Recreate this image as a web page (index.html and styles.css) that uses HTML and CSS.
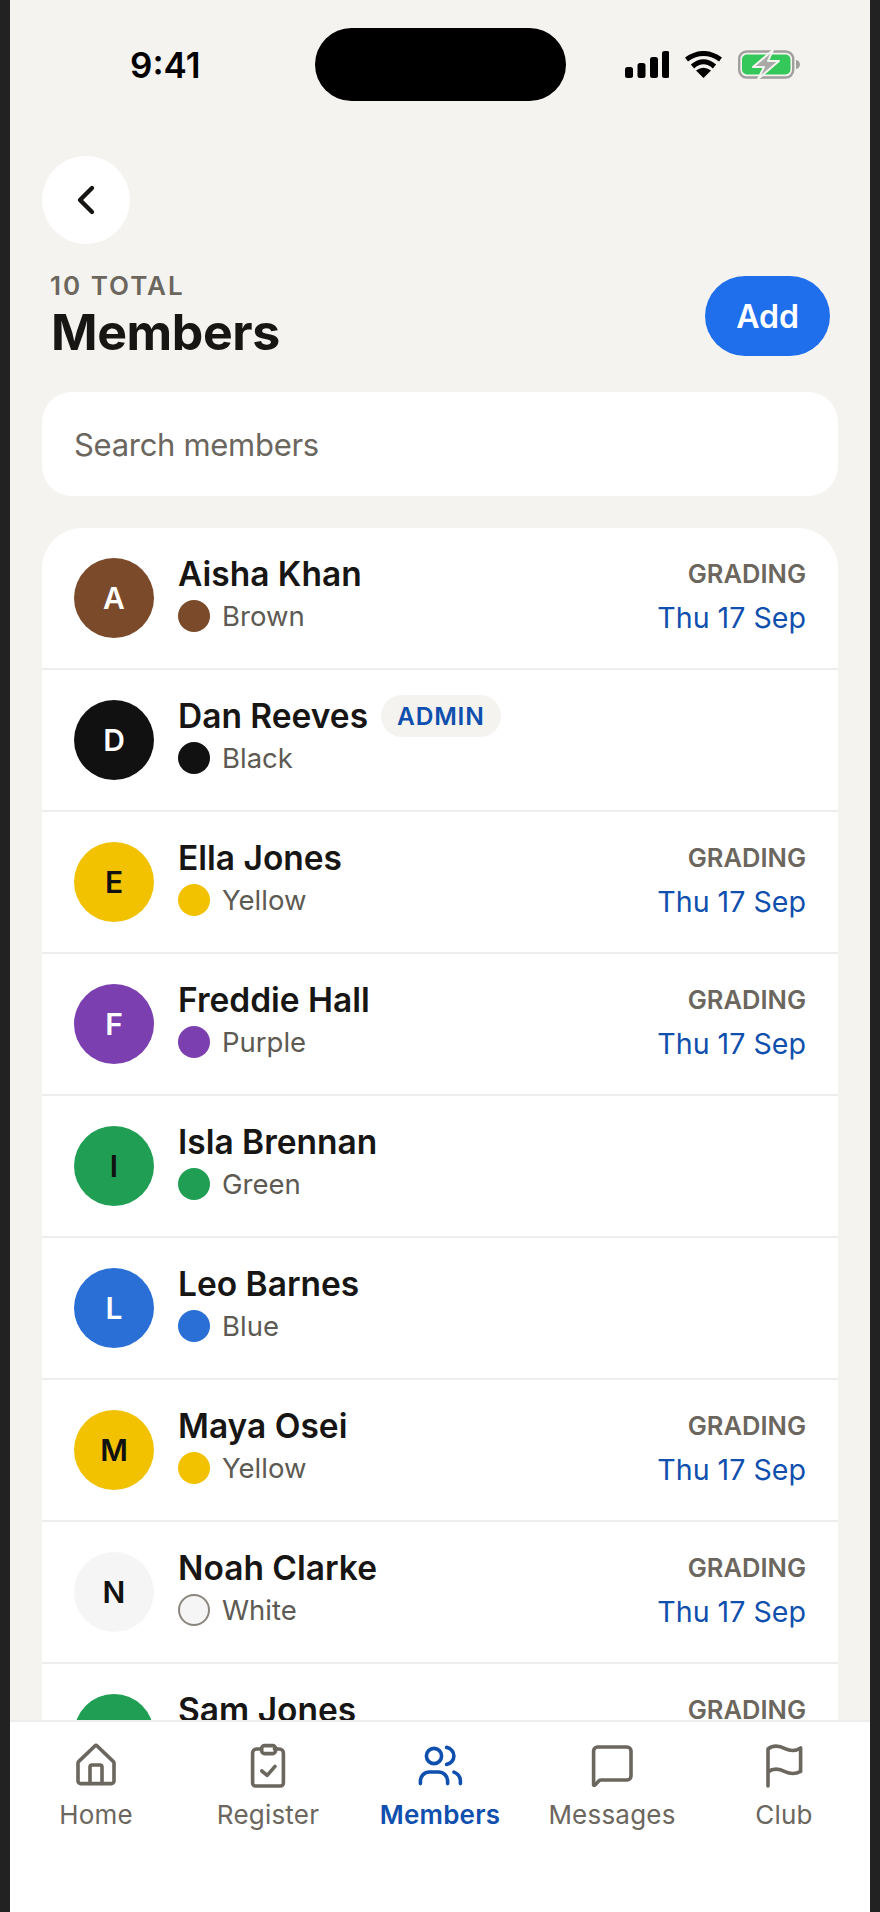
FILE: index.html
```html
<!DOCTYPE html>
<html lang="en">
<head>
    <meta charset="UTF-8">
    <meta name="viewport" content="width=device-width, initial-scale=1.0">
    <title>Members</title>
    <link rel="stylesheet" href="styles.css">
</head>
<body>
    <div class="phone">
        <div class="status-bar">
            <span class="status-time">9:41</span>
            <span class="island"></span>
            <div class="status-icons">
                <svg class="signal" width="44" height="27" viewBox="0 0 44 27" fill="#000">
                    <rect x="0" y="16" width="8" height="11" rx="2.5"/>
                    <rect x="12.5" y="12" width="8" height="15" rx="2.5"/>
                    <rect x="25" y="6" width="8" height="21" rx="2.5"/>
                    <rect x="37" y="0" width="7.5" height="27" rx="2.5"/>
                </svg>
                <svg class="wifi" width="39" height="27" viewBox="0 0 39 27">
                    <path d="M2.5 8.5Q19.5 -3.5 36.5 8.5" fill="none" stroke="#000" stroke-width="5"/>
                    <path d="M8.5 15.5Q19.5 6 30.5 15.5" fill="none" stroke="#000" stroke-width="5"/>
                    <path d="M19.5 27L12 19.5Q19.5 14 27 19.5Z" fill="#000"/>
                </svg>
                <svg class="battery" width="62" height="29" viewBox="0 0 62 29">
                    <rect x="1.2" y="1.5" width="54" height="26" rx="7.5" fill="none" stroke="#9f9f9d" stroke-width="2.4"/>
                    <rect x="4" y="4.5" width="48.5" height="20" rx="5" fill="#34c759"/>
                    <path d="M58 10c2.4 .5 4 2.200 4 4.500s-1.600 4-4 4.500Z" fill="#9f9f9d"/>
                    <path d="M35 0L15 17H26L20 29L41 11H30Z" fill="#a9a9a7" stroke="#f4f3ef" stroke-width="2" stroke-linejoin="round"/>
                </svg>
            </div>
        </div>

        <div class="content">
            <button class="back-btn" type="button" aria-label="Back">
                <svg width="48" height="48" viewBox="0 0 24 24" fill="none" stroke="#161513" stroke-width="2.200" stroke-linecap="round" stroke-linejoin="round">
                    <path d="M15 6L9 12l6 6"/>
                </svg>
            </button>

            <div class="page-head">
                <div>
                    <p class="overline">10 TOTAL</p>
                    <h1>Members</h1>
                </div>
                <button class="add-btn" type="button">Add</button>
            </div>

            <div class="search">Search members</div>

            <div class="member-list">
                <div class="member">
                    <div class="avatar belt-brown">A</div>
                    <div class="member-info">
                        <div class="name-line"><span class="name">Aisha Khan</span></div>
                        <div class="belt"><span class="dot belt-brown"></span>Brown</div>
                    </div>
                    <div class="grading">
                        <div class="grading-label">GRADING</div>
                        <div class="grading-date">Thu 17 Sep</div>
                    </div>
                </div>
                <div class="member">
                    <div class="avatar belt-black">D</div>
                    <div class="member-info">
                        <div class="name-line"><span class="name">Dan Reeves</span><span class="badge">ADMIN</span></div>
                        <div class="belt"><span class="dot belt-black"></span>Black</div>
                    </div>
                </div>
                <div class="member">
                    <div class="avatar belt-yellow">E</div>
                    <div class="member-info">
                        <div class="name-line"><span class="name">Ella Jones</span></div>
                        <div class="belt"><span class="dot belt-yellow"></span>Yellow</div>
                    </div>
                    <div class="grading">
                        <div class="grading-label">GRADING</div>
                        <div class="grading-date">Thu 17 Sep</div>
                    </div>
                </div>
                <div class="member">
                    <div class="avatar belt-purple">F</div>
                    <div class="member-info">
                        <div class="name-line"><span class="name">Freddie Hall</span></div>
                        <div class="belt"><span class="dot belt-purple"></span>Purple</div>
                    </div>
                    <div class="grading">
                        <div class="grading-label">GRADING</div>
                        <div class="grading-date">Thu 17 Sep</div>
                    </div>
                </div>
                <div class="member">
                    <div class="avatar belt-green">I</div>
                    <div class="member-info">
                        <div class="name-line"><span class="name">Isla Brennan</span></div>
                        <div class="belt"><span class="dot belt-green"></span>Green</div>
                    </div>
                </div>
                <div class="member">
                    <div class="avatar belt-blue">L</div>
                    <div class="member-info">
                        <div class="name-line"><span class="name">Leo Barnes</span></div>
                        <div class="belt"><span class="dot belt-blue"></span>Blue</div>
                    </div>
                </div>
                <div class="member">
                    <div class="avatar belt-yellow">M</div>
                    <div class="member-info">
                        <div class="name-line"><span class="name">Maya Osei</span></div>
                        <div class="belt"><span class="dot belt-yellow"></span>Yellow</div>
                    </div>
                    <div class="grading">
                        <div class="grading-label">GRADING</div>
                        <div class="grading-date">Thu 17 Sep</div>
                    </div>
                </div>
                <div class="member">
                    <div class="avatar belt-white">N</div>
                    <div class="member-info">
                        <div class="name-line"><span class="name">Noah Clarke</span></div>
                        <div class="belt"><span class="dot belt-white dot-outline"></span>White</div>
                    </div>
                    <div class="grading">
                        <div class="grading-label">GRADING</div>
                        <div class="grading-date">Thu 17 Sep</div>
                    </div>
                </div>
                <div class="member">
                    <div class="avatar belt-green">S</div>
                    <div class="member-info">
                        <div class="name-line"><span class="name">Sam Jones</span></div>
                        <div class="belt"><span class="dot belt-green"></span>Green</div>
                    </div>
                    <div class="grading">
                        <div class="grading-label">GRADING</div>
                        <div class="grading-date">Thu 17 Sep</div>
                    </div>
                </div>
            </div>
        </div>

        <nav class="tab-bar">
            <a class="tab" href="#">
                <svg width="48" height="48" viewBox="0 0 24 24" fill="none" stroke="currentColor" stroke-width="1.800" stroke-linecap="round" stroke-linejoin="round">
                    <path d="M3.300 10.300L11.300 2.600a1 1 0 0 1 1.400 0L20.700 10.300a1 1 0 0 1 .3 .7V20a1.300 1.300 0 0 1-1.300 1.300H4.300A1.300 1.300 0 0 1 3 20V11a1 1 0 0 1 .3-.7Z"/>
                    <path d="M9 21.300V13a1 1 0 0 1 1-1h4a1 1 0 0 1 1 1v8.300"/>
                </svg>
                <span>Home</span>
            </a>
            <a class="tab" href="#">
                <svg width="48" height="48" viewBox="0 0 24 24" fill="none" stroke="currentColor" stroke-width="1.800" stroke-linecap="round" stroke-linejoin="round">
                    <path d="M8.800 4H6.300A2 2 0 0 0 4.300 6v15a1.500 1.500 0 0 0 1.500 1.500h12.400a1.500 1.500 0 0 0 1.500-1.500V6a2 2 0 0 0-2-2h-2.500"/>
                    <rect x="8.800" y="2.300" width="7" height="4" rx="1.500"/>
                    <path d="M8.900 15l2.700 2.200 3.900-4.500"/>
                </svg>
                <span>Register</span>
            </a>
            <a class="tab tab-active" href="#">
                <svg width="48" height="48" viewBox="0 0 24 24" fill="none" stroke="currentColor" stroke-width="1.800" stroke-linecap="round" stroke-linejoin="round">
                    <circle cx="9" cy="7.500" r="3.800"/>
                    <path d="M15.300 3.200a4.300 4.300 0 0 1 0 8.500"/>
                    <path d="M2.200 21.300V20a4.500 4.500 0 0 1 4.500-4.500h4.600a4.500 4.500 0 0 1 4.500 4.500v1.300"/>
                    <path d="M19 15.600c2 .8 3.200 2.500 3.200 4.500v1.200"/>
                </svg>
                <span>Members</span>
            </a>
            <a class="tab" href="#">
                <svg width="48" height="48" viewBox="0 0 24 24" fill="none" stroke="currentColor" stroke-width="1.800" stroke-linecap="round" stroke-linejoin="round">
                    <path d="M2.800 21.900V5a2 2 0 0 1 2-2H19.500a2 2 0 0 1 2 2V17.500a2 2 0 0 1-2 2H6.500a1.500 1.500 0 0 0-1 .4L3.500 22a.4 .4 0 0 1-.7-.1Z"/>
                </svg>
                <span>Messages</span>
            </a>
            <a class="tab" href="#">
                <svg width="48" height="48" viewBox="0 0 24 24" fill="none" stroke="currentColor" stroke-width="1.800" stroke-linecap="round" stroke-linejoin="round">
                    <path d="M4 22.500V4C7 1.600 10 2.500 12.500 3.800C15 5 18 5 20.300 3.500V15.200C18 16.500 15 16.500 12.500 15.300C10 14 7 13.200 4 15.500"/>
                </svg>
                <span>Club</span>
            </a>
        </nav>
    </div>
</body>
</html>
```
FILE: styles.css
```css
:root {
    --bg-color: #f4f3ef;
    --text-color: #171614;
    --muted-color: #6b665e;
    --blue-color: #0f4fae;
    --line-color: #eeeeee;
}

* {
    box-sizing: border-box;
}

body {
    margin: 0;
    background-color: #222222;
    font-family: Inter, "Liberation Sans", sans-serif;
    color: var(--text-color);
}

.phone {
    position: relative;
    height: 1912px;
    margin: 0 10px;
    background-color: var(--bg-color);
    overflow: hidden;
}

/* Status bar */
.status-bar {
    position: relative;
    height: 156px;
}

.status-time {
    position: absolute;
    left: 120px;
    top: 44px;
    font-size: 35px;
    line-height: 42px;
    font-weight: 600;
    color: #000000;
}

.island {
    position: absolute;
    left: 305px;
    top: 28px;
    width: 251px;
    height: 73px;
    border-radius: 37px;
    background-color: #000000;
}

.status-icons {
    position: absolute;
    left: 615px;
    top: 50px;
    display: flex;
    align-items: flex-start;
    gap: 15px;
}

.signal, .wifi {
    margin-top: 1px;
}

/* Page head */
.content {
    padding: 0 32px;
}

.back-btn {
    display: flex;
    align-items: center;
    justify-content: center;
    width: 88px;
    height: 88px;
    padding: 0;
    border: none;
    border-radius: 50%;
    background-color: #ffffff;
}

.page-head {
    display: flex;
    justify-content: space-between;
    align-items: center;
    margin-top: 26px;
    padding: 0 8px;
}

.overline {
    margin: 0;
    font-size: 26px;
    line-height: 32px;
    font-weight: 600;
    letter-spacing: 2px;
    color: var(--muted-color);
}

h1 {
    margin: 0 0 0 1px;
    font-size: 50px;
    line-height: 60px;
    font-weight: 700;
    letter-spacing: -0.4px;
}

.add-btn {
    width: 125px;
    height: 80px;
    border: none;
    border-radius: 40px;
    background-color: #1f6fec;
    color: #ffffff;
    font-family: inherit;
    font-size: 32px;
    font-weight: 600;
}

.search {
    height: 104px;
    margin-top: 30px;
    padding: 2px 32px 0;
    border-radius: 30px;
    background-color: #ffffff;
    font-size: 31px;
    line-height: 102px;
    letter-spacing: -0.3px;
    color: var(--muted-color);
}

/* Member list */
.member-list {
    margin-top: 32px;
    border-radius: 40px;
    background-color: #ffffff;
}

.member {
    display: flex;
    align-items: flex-start;
    height: 142px;
    padding: 30px 32px 0;
    border-bottom: 2px solid var(--line-color);
}

.avatar {
    flex: none;
    width: 80px;
    height: 80px;
    margin-right: 24px;
    border-radius: 50%;
    font-size: 30px;
    line-height: 80px;
    font-weight: 600;
    text-align: center;
}

.member-info {
    flex: 1;
    margin-top: -6px;
}

.name-line {
    display: flex;
    align-items: center;
    height: 44px;
}

.name {
    font-size: 33.500px;
    font-weight: 600;
}

.badge {
    height: 42px;
    margin-left: 13px;
    padding: 0 16px;
    border-radius: 21px;
    background-color: var(--bg-color);
    color: var(--blue-color);
    font-size: 24.500px;
    line-height: 42px;
    font-weight: 600;
    letter-spacing: 0.800px;
}

.belt {
    display: flex;
    align-items: center;
    height: 40px;
    font-size: 27.500px;
    color: #5d5a53;
}

.dot {
    width: 32px;
    height: 32px;
    margin-right: 12px;
    border-radius: 50%;
}

.dot-outline {
    border: 2px solid #8a867e;
}

.belt-brown { background-color: #7a4a2a; color: #ffffff; }
.belt-black { background-color: #111111; color: #ffffff; }
.belt-yellow { background-color: #f2c200; color: #111111; }
.belt-purple { background-color: #7b3fb0; color: #ffffff; }
.belt-green { background-color: #1f9e54; color: #111111; }
.belt-blue { background-color: #2a6fd6; color: #ffffff; }
.belt-white { background-color: #f5f5f5; color: #111111; }

.grading {
    margin-top: -2px;
    text-align: right;
}

.grading-label {
    font-size: 25.500px;
    line-height: 36px;
    font-weight: 600;
    color: var(--muted-color);
}

.grading-date {
    margin-top: 8px;
    font-size: 28.600px;
    line-height: 36px;
    color: var(--blue-color);
}

/* Bottom tabs */
.tab-bar {
    position: absolute;
    left: 0;
    right: 0;
    bottom: 0;
    display: grid;
    grid-template-columns: repeat(5, 1fr);
    height: 192px;
    padding-top: 19px;
    border-top: 2px solid var(--line-color);
    background-color: #ffffff;
}

.tab {
    display: flex;
    flex-direction: column;
    align-items: center;
    height: 90px;
    color: var(--muted-color);
    font-size: 26px;
    line-height: 32px;
    letter-spacing: 0.200px;
    text-decoration: none;
}

.tab span {
    margin-top: 10px;
}

.tab-active {
    color: var(--blue-color);
    font-weight: 600;
}
```
